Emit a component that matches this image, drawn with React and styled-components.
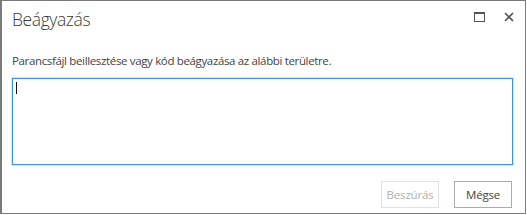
import React from "react";
import styled, { createGlobalStyle } from "styled-components";

const Global = createGlobalStyle`
  html, body { margin: 0; padding: 0; background: #fff; }
  body { font-family: "Segoe UI", "Open Sans", "Noto Sans", sans-serif; }
  * { box-sizing: border-box; }
`;

const Dialog = styled.div`
  width: 526px;
  height: 214px;
  border: 1px solid #7a7a7a;
  border-left-width: 2px;
  background: #fff;
  display: flex;
  flex-direction: column;
`;

const Header = styled.div`
  display: flex;
  align-items: flex-start;
  justify-content: space-between;
  padding: 5px 0 0 10px;
  height: 44px;
`;

const Title = styled.h1`
  margin: 0;
  font-family: "Open Sans", sans-serif;
  font-weight: 300;
  font-size: 17.5px;
  letter-spacing: -0.4px;
  line-height: 26px;
  color: #3a3a3a;
`;

const Controls = styled.div`
  display: flex;
  gap: 10px;
  padding: 2px 6px 0 0;
`;

const IconButton = styled.button`
  width: 20px;
  height: 18px;
  padding: 0;
  border: none;
  background: transparent;
  display: flex;
  align-items: center;
  justify-content: center;
  color: #555;
`;

const Body = styled.div`
  flex: 1;
  padding: 7px 12px 0 10px;
  display: flex;
  flex-direction: column;
`;

const Description = styled.p`
  margin: 0;
  font-family: "Open Sans", sans-serif;
  font-size: 11.5px;
  line-height: 18px;
  color: #444;
  letter-spacing: -0.35px;
`;

const Editor = styled.div`
  margin-top: 8px;
  height: 87px;
  border: 1px solid #3d95d8;
  box-shadow: 0 0 0 1px #d4e8f7;
  padding: 3px 3px;
`;

const Caret = styled.span`
  display: block;
  width: 1px;
  height: 12px;
  background: #111;
`;

const Footer = styled.div`
  display: flex;
  justify-content: flex-end;
  gap: 15px;
  padding: 0 13px 5px 0;
`;

const Button = styled.button`
  width: 58px;
  height: 27px;
  padding: 0;
  background: #fff;
  font-family: "Open Sans", sans-serif;
  font-size: 11.5px;
  letter-spacing: -0.2px;
  border: 1px solid ${(p) => (p.disabled ? "#e1e1e1" : "#ababab")};
  color: ${(p) => (p.disabled ? "#b0b0b0" : "#444")};
`;

export default function App() {
  return (
    <>
      <Global />
      <Dialog>
        <Header>
          <Title>Beágyazás</Title>
          <Controls>
            <IconButton aria-label="Teljes méret">
              <svg width="11" height="10" viewBox="0 0 11 10">
                <rect x="0.5" y="0.5" width="10" height="9" fill="none" stroke="#555" />
                <rect x="0" y="0" width="11" height="2" fill="#555" />
              </svg>
            </IconButton>
            <IconButton aria-label="Bezárás">
              <svg width="10" height="10" viewBox="0 0 10 10">
                <path d="M1 1L9 9M9 1L1 9" stroke="#555" strokeWidth="1.6" />
              </svg>
            </IconButton>
          </Controls>
        </Header>
        <Body>
          <Description>Parancsfájl beillesztése vagy kód beágyazása az alábbi területre.</Description>
          <Editor>
            <Caret />
          </Editor>
        </Body>
        <Footer>
          <Button disabled>Beszúrás</Button>
          <Button>Mégse</Button>
        </Footer>
      </Dialog>
    </>
  );
}
